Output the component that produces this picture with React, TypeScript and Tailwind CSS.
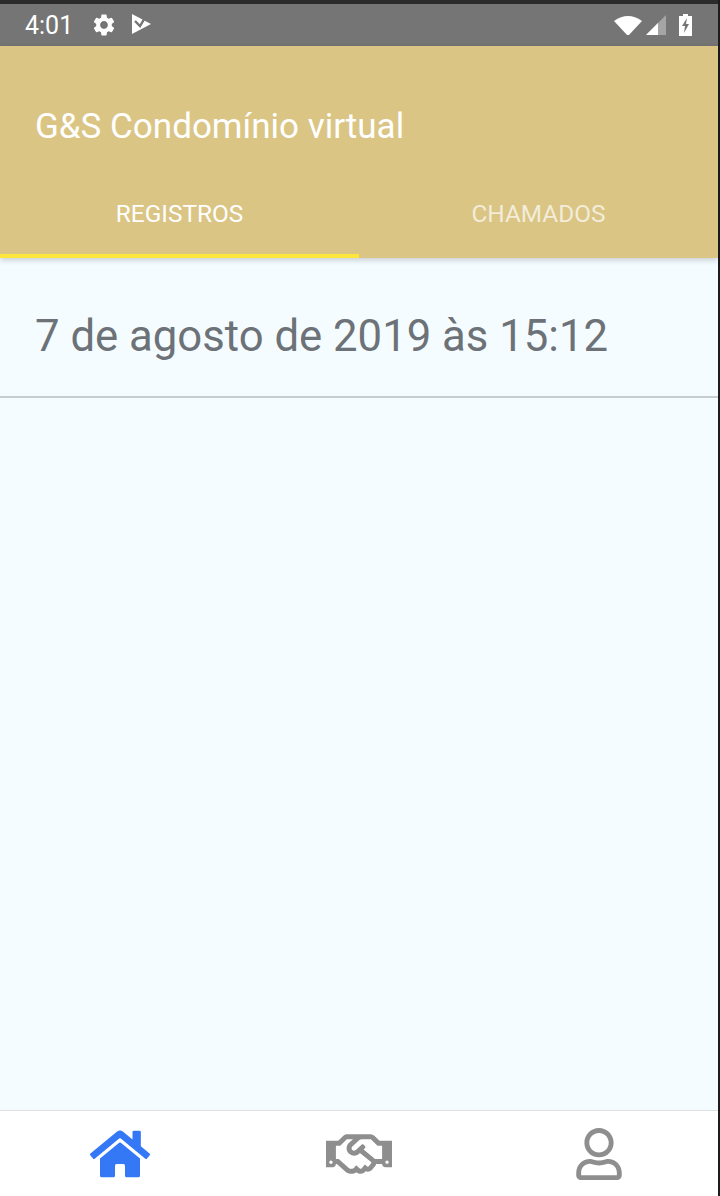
import { FaHome, FaRegHandshake, FaRegUser } from "react-icons/fa";
import { MdSettings } from "react-icons/md";

export default function App() {
  return (
    <div className="flex h-[1196px] w-[720px] overflow-hidden bg-[#1c1c1c] font-['Roboto',sans-serif]">
      <div className="flex h-full w-[718px] flex-col bg-white">
        <div className="h-[4px] bg-[#2b2b2b]" />
        <div className="flex h-[42px] items-center bg-[#757575] pl-[25px] pr-[26px] text-white">
          <span className="text-[25px] leading-none">4:01</span>
          <MdSettings className="ml-[18px] text-[26px]" />
          <svg className="ml-[15px] mb-[2px]" width="20" height="20" viewBox="0 0 20 20" fill="white">
            <path d="M0 0 L19 10 L0 20 Z" />
            <path d="M3 7 L8 12 L14 2" fill="none" stroke="#757575" strokeWidth="2.4" />
          </svg>
          <div className="ml-auto flex items-center">
            <svg width="28" height="20" viewBox="0 0 28 20" fill="white">
              <path d="M0 6 Q14 -4 28 6 L14 21 Z" />
            </svg>
            <svg className="ml-[4px]" width="20" height="20" viewBox="0 0 20 20">
              <path d="M20 0 V20 H0 Z" fill="#ffffff" fillOpacity="0.35" />
              <path d="M12 8 V20 H0 Z" fill="#ffffff" />
            </svg>
            <svg className="ml-[13px]" width="13" height="22" viewBox="0 0 13 22">
              <path d="M4 0 H9 V2 H13 V22 H0 V2 H4 Z" fill="white" />
              <path d="M8 4 L3 12 H6 L5 19 L10 10 H7 Z" fill="#757575" />
            </svg>
          </div>
        </div>

        <div className="z-10 flex h-[212px] flex-col bg-[#dac585] shadow-[0_2px_6px_rgba(0,0,0,0.2)]">
          <div className="flex h-[146px] items-center pl-[35px] pt-[16px] text-[35px] text-white">
            G&amp;S Condomínio virtual
          </div>
          <div className="flex flex-1">
            <div className="flex flex-1 flex-col">
              <div className="flex flex-1 items-center justify-center pb-[18px] text-[24.4px] text-white">REGISTROS</div>
              <div className="h-[4px] bg-[#ffe63b]" />
            </div>
            <div className="flex flex-1 items-center justify-center pb-[22px] text-[24.4px] text-white/70">CHAMADOS</div>
          </div>
        </div>

        <div className="flex flex-1 flex-col bg-[#f5fcff]">
          <div className="flex h-[140px] items-center border-b-2 border-[#c8ccce] pl-[35px] pt-[20px] text-[43.7px] text-[#6c7277]">
            7 de agosto de 2019 às 15:12
          </div>
        </div>

        <div className="grid h-[86px] grid-cols-3 items-center border-t border-[#dfe1e2] bg-white">
          <div className="flex justify-center"><FaHome className="text-[60px] text-[#3478f6]" /></div>
          <div className="flex justify-center"><FaRegHandshake className="text-[66px] text-[#8e8e8e]" /></div>
          <div className="flex justify-center pl-[2px]"><FaRegUser className="text-[52px] text-[#8e8e8e]" /></div>
        </div>
      </div>
    </div>
  );
}
